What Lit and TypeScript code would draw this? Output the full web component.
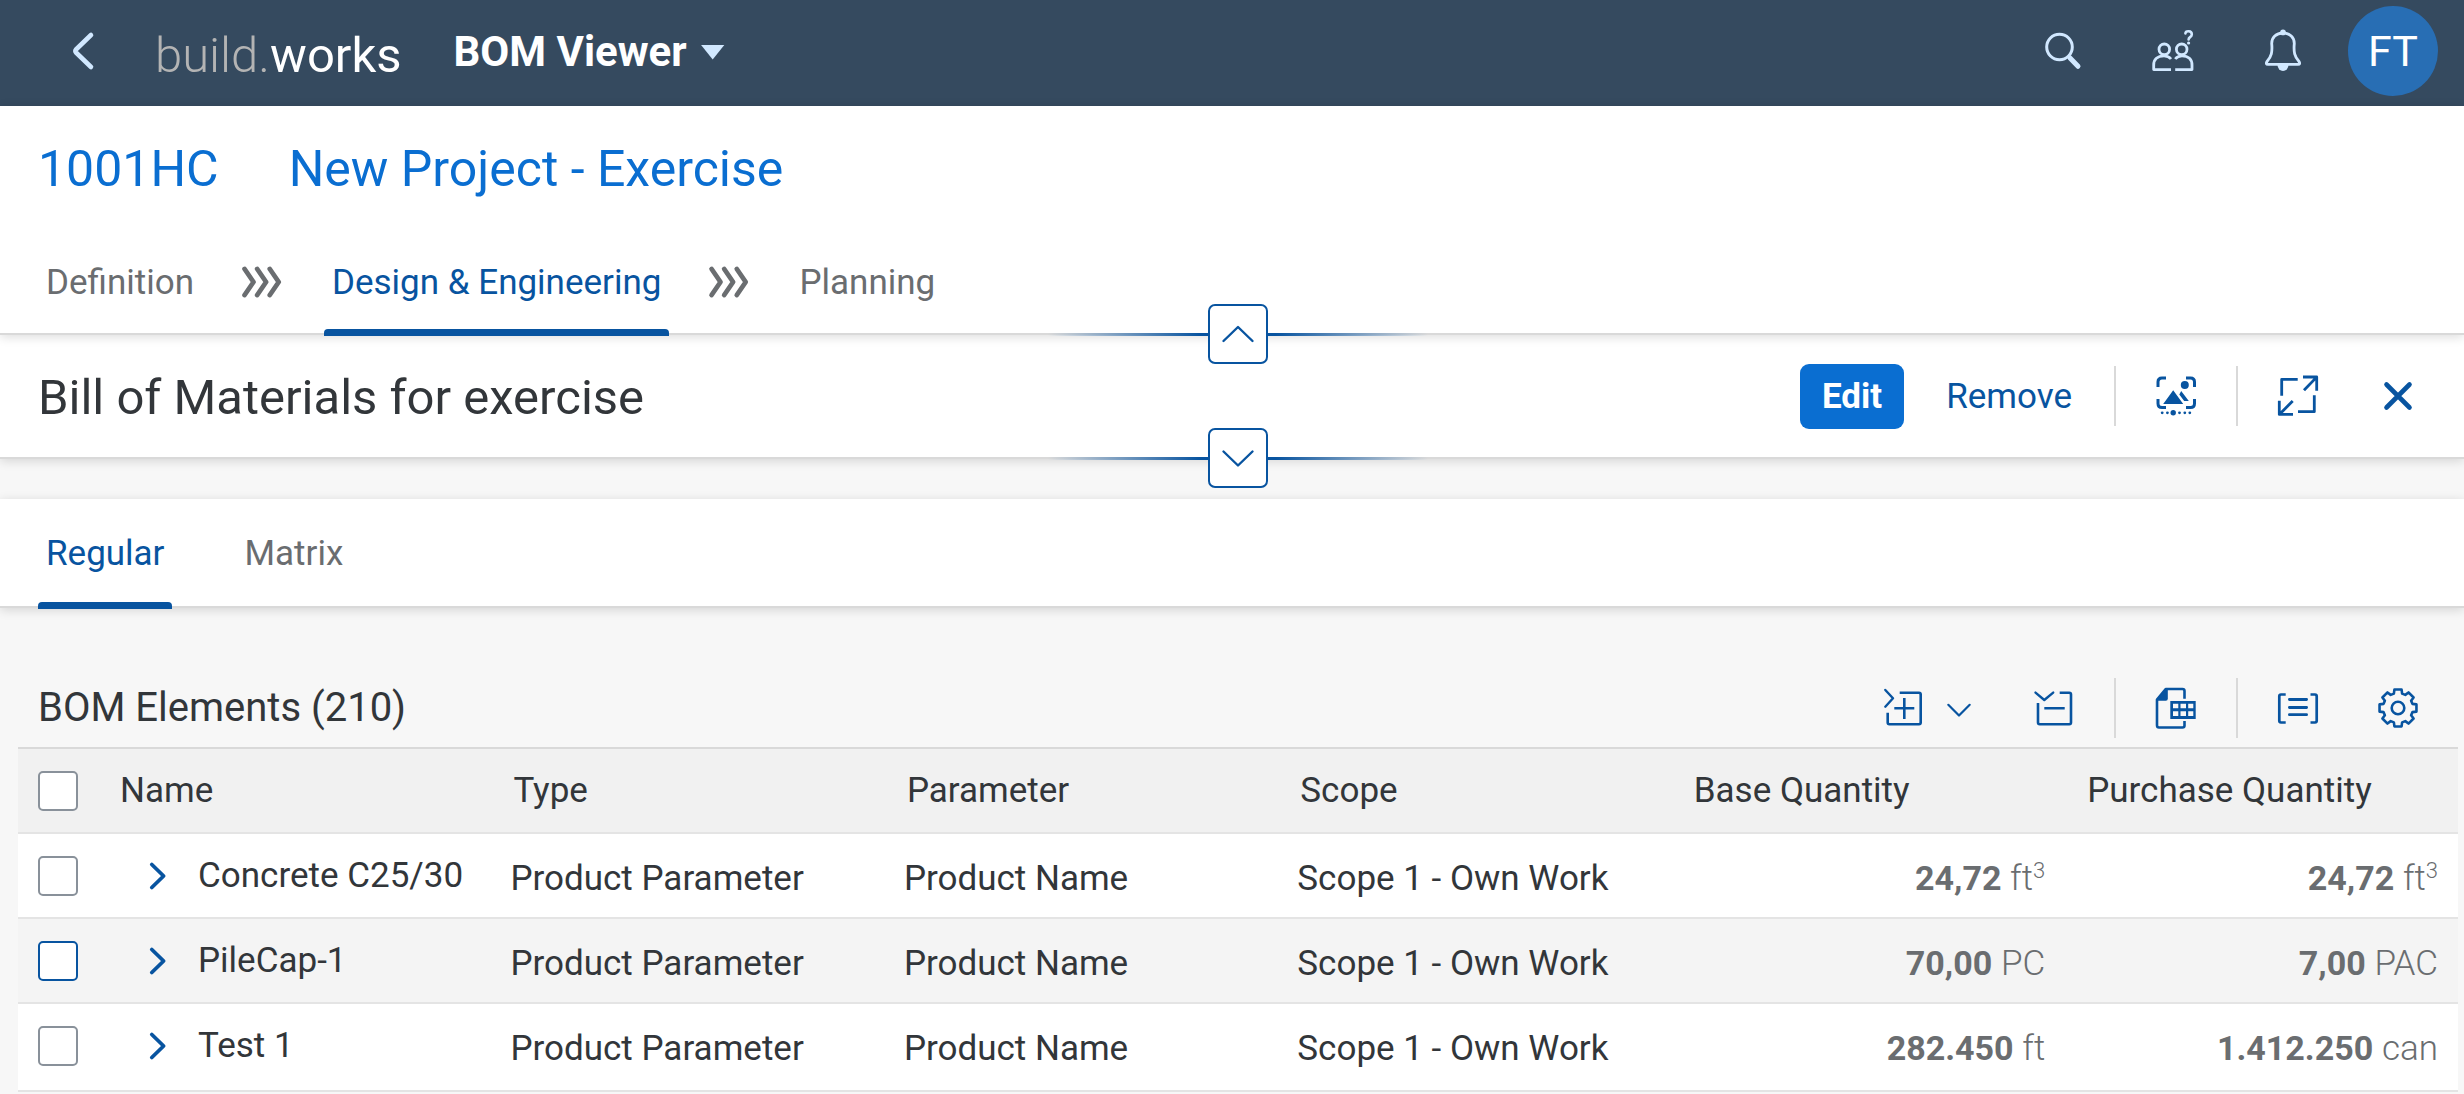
import { LitElement, html, css, svg, nothing, type TemplateResult } from "lit";
import { customElement, property } from "lit/decorators.js";
import { classMap } from "lit/directives/class-map.js";

const gearPath = (): string => {
  const points: string[] = [];
  for (let tooth = 0; tooth < 8; tooth++) {
    for (const [radius, offset] of [[15, -16], [18.8, -11], [18.8, 11], [15, 16]]) {
      const angle = ((tooth * 45 + offset - 90) * Math.PI) / 180;
      points.push(`${(24 + radius * Math.cos(angle)).toFixed(2)} ${(24 + radius * Math.sin(angle)).toFixed(2)}`);
    }
  }
  return `M${points.join("L")}Z`;
};

const icons: Record<string, TemplateResult> = {
  back: svg`<path stroke-width="4.6" d="M31 8 L16 22.5 Q14.8 24 16 25.5 L31 40"/>`,
  search: svg`<circle cx="20.5" cy="20" r="12.8" stroke-width="3"/><path stroke-width="5" d="M31 31 L39 39.3"/>`,
  people: svg`<g stroke-width="2.8" stroke-linecap="butt"><circle cx="15.3" cy="22.3" r="5.3"/><circle cx="32.7" cy="22.3" r="5.3"/>
    <path d="M22 32 C20 29.5 18 28.8 15 28.8 C8.5 28.8 4.7 32.5 4.7 38 V42.6 H22"/>
    <path d="M26.2 32 C28.2 29.5 30 28.8 33 28.8 C39.5 28.8 43 32.5 43 38 V42.6 H26.2"/></g>
    <path stroke-width="2.6" d="M36.4 6.4 C36.6 3.6 42.8 3.2 42.8 7.4 C42.8 10.2 39.6 10 39.6 12.4"/><circle class="solid" cx="39.6" cy="16" r="1.6"/>`,
  bell: svg`<path stroke-width="2.8" d="M24 6 C17 6 12.7 10.8 12.7 16.5 C13.5 25 12.5 29.5 8 34.5 Q6.3 37.4 9 37.4 H39 Q41.7 37.4 40 34.5 C35.5 29.5 34.5 25 35.3 16.5 C35.3 10.8 31 6 24 6Z"/>
    <circle class="solid" cx="24" cy="5.4" r="2.8"/><path class="solid" d="M18.5 38 H29.5 A5.5 6 0 0 1 18.5 38Z"/>`,
  picture: svg`<path stroke-width="3" stroke-linecap="butt" d="M6 15 V10 Q6 6 10 6 H14 M34 6 H38.5 Q42.5 6 42.5 10 V15 M6 27 V31.5 Q6 35.5 10 35.5 H14 M34 35.5 H38.5 Q42.5 35.5 42.5 31.5 V27"/>
    <path class="solid" d="M21.2 18.3 L31.2 32 H11.2Z M27.3 22.5 L29.2 19 L36.8 29 H32.2Z"/>
    <circle class="solid" cx="32.8" cy="13" r="4"/><circle class="solid" cx="21.2" cy="40.8" r="2.7"/>
    ${[10.2, 15.4, 27.5, 32.8, 37.8].map((x) => svg`<circle class="solid" cx=${x} cy="40.8" r="1.4"/>`)}`,
  fullscreen: svg`<path stroke-width="2.8" stroke-linecap="butt" d="M7.7 23.7 V7.3 H23.7 M40.3 23.3 V39.7 H24 M29 5 H42.7 V18.7 M42.4 5.4 L30 18.3 M5.3 28.7 V42.4 H19 M18.7 29 L5.6 42.2"/>`,
  close: svg`<path stroke-width="4.6" d="M12.5 12.5 L35.5 35.5 M35.5 12.5 L12.5 35.5"/>`,
  expandAll: svg`<path stroke-width="2.4" d="M6.3 6 L14 14.3 L6.3 22.7"/><path stroke-width="2.6" stroke-linecap="butt" d="M20.7 8.7 H40 Q41.7 8.7 41.7 10.4 V38.6 Q41.7 40.3 40 40.3 H10.4 Q8.7 40.3 8.7 38.6 V28.7 M15.3 24.3 H35.3 M25.3 14 V35"/>`,
  collapseAll: svg`<path stroke-width="2.4" d="M5.5 8.6 L14.3 16 L23.2 8.6"/><path stroke-width="2.6" stroke-linecap="butt" d="M29.7 8.7 H39.3 Q41 8.7 41 10.4 V38.6 Q41 40.3 39.3 40.3 H9.7 Q8 40.3 8 38.6 V19 M14.3 24.3 H34.7"/>`,
  excel: svg`<path stroke-width="2.6" stroke-linecap="butt" d="M32.5 14.7 V7 Q32.5 5 30.5 5 H13.7 L5 15.5 V41.3 Q5 43.5 7 43.5 H30.5 Q32.5 43.5 32.5 41.5 V37"/>
    <path class="solid" d="M13.5 5 H15.8 V14.7 Q15.8 16.7 13.8 16.7 H5Z"/>
    <path class="solid" fill-rule="evenodd" d="M18.3 17 H43.7 V35 H18.3Z M21 19.7 V24.3 H26.3 V19.7Z M28.5 19.7 V24.3 H34 V19.7Z M36.2 19.7 V24.3 H41.3 V19.7Z M21 27.3 V32 H26.3 V27.3Z M28.5 27.3 V32 H34 V27.3Z M36.2 27.3 V32 H41.3 V27.3Z"/>`,
  list: svg`<path stroke-width="2.7" stroke-linecap="butt" d="M11.7 10.5 H7 Q5.3 10.5 5.3 12.2 V36.8 Q5.3 38.5 7 38.5 H11.7 M36.5 10.5 H41 Q42.7 10.5 42.7 12.2 V36.8 Q42.7 38.5 41 38.5 H36.5"/><path stroke-width="2.8" d="M15.4 15.5 H32.6 M15.4 23.5 H32.6 M15.4 30.7 H32.6"/>`,
  gear: svg`<path stroke-width="2.6" d=${gearPath()}/><circle cx="24" cy="24" r="6.3" stroke-width="2.6"/>`,
  up: svg`<path stroke-width="2.4" d="M9.5 31 L24 17 L38.5 31"/>`,
  down: svg`<path stroke-width="2.4" d="M9.5 17.5 L24 31.5 L38.5 17.5"/>`,
  menuDown: svg`<path stroke-width="2.2" d="M13.3 20.8 L24 31.5 L34.7 20.8"/>`,
  right: svg`<path stroke-width="3.8" d="M18.8 12.5 L30.6 24 L18.8 35.5"/>`,
  steps: svg`<path stroke-width="4.8" d="M5.6 11 L14.5 24 L5.6 37 M18.2 11 L27.1 24 L18.2 37 M30.8 11 L39.7 24 L30.8 37"/>`,
};

@customElement("ui-icon")
export class UiIcon extends LitElement {
  static styles = css`
    :host { display: inline-flex; flex: none; }
    svg { display: block; width: 48px; height: 48px; fill: none; stroke: currentColor; stroke-linecap: round; stroke-linejoin: round; }
    .solid { fill: currentColor; stroke: none; }
  `;
  @property() name = "";
  render() {
    return html`<svg viewBox="0 0 48 48" aria-hidden="true">${icons[this.name] ?? nothing}</svg>`;
  }
}

interface Quantity { value: string; unit: string; power?: string }
interface BomRow { name: string; type: string; parameter: string; scope: string; base: Quantity; purchase: Quantity; active?: boolean }

const common = { type: "Product Parameter", parameter: "Product Name", scope: "Scope 1 - Own Work" };
const rows: BomRow[] = [
  { name: "Concrete C25/30", ...common, base: { value: "24,72", unit: "ft", power: "3" }, purchase: { value: "24,72", unit: "ft", power: "3" } },
  { name: "PileCap-1", ...common, base: { value: "70,00", unit: "PC" }, purchase: { value: "7,00", unit: "PAC" }, active: true },
  { name: "Test 1", ...common, base: { value: "282.450", unit: "ft" }, purchase: { value: "1.412.250", unit: "can" } },
];
const columns = ["Name", "Type", "Parameter", "Scope", "Base Quantity", "Purchase Quantity"];

@customElement("app-root")
export class AppRoot extends LitElement {
  static styles = css`
    :host { display: block; min-height: 100vh; background: #f7f7f7; color: #32363a; font: 35px/48px Roboto, "Liberation Sans", sans-serif; }
    *, *::before, *::after { box-sizing: border-box; }
    h1, h2, h3 { margin: 0; font-weight: 400; }
    button { margin: 0; padding: 0; border: 0; background: none; color: inherit; font: inherit; display: inline-flex; align-items: center; justify-content: center; cursor: pointer; }
    a { color: inherit; text-decoration: none; }

    .shell { display: flex; align-items: center; height: 106px; padding: 0 26px 4px 60px; background: #354a5f; color: #d1e8ff; }
    .logo { margin-left: 47px; padding-top: 10px; font-size: 49px; color: #fff; }
    .logo-light { font-weight: 300; color: #b4b4b4; }
    .app-title { gap: 14px; margin-left: 52px; padding-top: 2px; font-size: 42px; font-weight: 700; color: #fff; }
    .triangle { width: 24px; height: 15px; background: #d1e8ff; clip-path: polygon(0 0, 100% 0, 50% 100%); }
    .shell-actions { display: flex; gap: 20px; margin-left: auto; }
    .shell-button { width: 90px; height: 90px; }
    .avatar { border-radius: 50%; background: #286eb4; color: #fff; font-size: 43px; }

    .panel { position: relative; background: #fff; border-bottom: 2px solid #d9d9d9; box-shadow: 0 2px 10px rgba(0, 0, 0, 0.14); }
    .project { z-index: 2; }
    .document { z-index: 1; display: flex; align-items: center; justify-content: space-between; height: 124px; padding: 0 26px 0 38px; }
    .project-title { display: flex; align-items: center; gap: 70px; min-height: 125px; padding: 0 38px; font-size: 50px; color: #0a6ed1; }
    .document-title { padding-top: 4px; font-size: 49px; line-height: 60px; }

    .tabs { display: flex; align-items: center; gap: 40px; height: 102px; padding: 0 38px; color: #6a6d70; }
    .view-tabs { gap: 64px; height: 107px; }
    .tab { position: relative; display: flex; align-items: center; height: 100%; padding: 2px 8px 0; }
    .tab.selected { color: #0854a0; }
    .tab.selected::after { content: ""; position: absolute; left: 0; right: 0; bottom: -3px; height: 7px; border-radius: 4px 4px 0 0; background: #0854a0; }
    .step { display: flex; width: 42px; justify-content: center; }

    .toggle { position: absolute; left: calc(50% + 6px); bottom: -31px; width: 380px; height: 60px; margin-left: -190px; display: flex; justify-content: center; align-items: center; pointer-events: none; }
    .toggle::before { content: ""; position: absolute; left: 0; right: 0; top: 29px; height: 3px; background: linear-gradient(90deg, transparent, #0854a0 40%, #0854a0 60%, transparent); }
    .toggle-button { position: relative; width: 60px; height: 60px; border: 2px solid #0854a0; border-radius: 7px; background: #fff; color: #0854a0; pointer-events: auto; }

    .actions { display: flex; align-items: center; gap: 20px; color: #0854a0; }
    .icon-button { width: 80px; height: 65px; }
    .text-button { height: 65px; padding: 2px 22px 0; }
    .primary { border-radius: 9px; background: #0a6ed1; color: #fff; font-weight: 700; }
    .divider { width: 2px; height: 60px; background: #d9d9d9; }
    .split { display: flex; padding-right: 10px; }
    .split-main { width: 62px; height: 65px; }
    .split-menu { width: 50px; height: 65px; }

    .views { margin-top: 40px; }
    .toolbar { display: flex; align-items: center; justify-content: space-between; height: 78px; margin-top: 61px; padding: 0 26px 0 38px; }
    .toolbar-title { font-size: 40px; }

    .table-wrap { padding: 0 6px 0 18px; }
    table { width: 100%; table-layout: fixed; border-collapse: separate; border-spacing: 0; border-top: 2px solid #d9d9d9; }
    .col-check { width: 84px; }
    .col-data { width: 16.125%; }
    th, td { height: 85px; padding: 0 18px; border-bottom: 2px solid #e4e4e4; text-align: left; font-weight: 400; white-space: nowrap; vertical-align: middle; }
    th { background: #f1f1f1; }
    td { padding: 7px 15px 0; background: #fff; }
    tr.active td { background: #f4f4f4; }
    .check-cell { padding: 0 0 0 20px; }
    .name-cell { padding: 0 13px 0 35px; }
    .name { display: flex; align-items: center; gap: 21px; }
    .row-toggle { width: 40px; height: 48px; color: #0854a0; }
    .quantity { padding: 5px 24px 0 0; text-align: right; color: #6a6d70; }
    .quantity:last-child { padding-right: 20px; }
    tr:last-child td { height: 88px; padding-bottom: 3px; }
    .value { font-size: 34px; font-weight: 700; }
    .unit { font-weight: 300; }
    sup { font-size: 22px; line-height: 0; vertical-align: 12px; }
    .check { appearance: none; display: block; width: 40px; height: 40px; margin: 0; border: 2px solid #89919a; border-radius: 5px; background: #fff; }
    .check:checked { background: #0854a0; }
    tr.active .check { border-color: #0854a0; }
  `;

  private iconButton(name: string, label: string, cls = "icon-button") {
    return html`<button class=${cls} aria-label=${label}><ui-icon name=${name}></ui-icon></button>`;
  }

  private toggle(name: string, label: string) {
    return html`<div class="toggle">${this.iconButton(name, label, "toggle-button")}</div>`;
  }

  private quantity(q: Quantity) {
    return html`<td class="quantity"><span class="value">${q.value}</span> <span class="unit">${q.unit}${q.power ? html`<sup>${q.power}</sup>` : nothing}</span></td>`;
  }

  private row(r: BomRow) {
    return html`<tr class=${classMap({ active: !!r.active })}>
      <td class="check-cell"><input class="check" type="checkbox" aria-label=${r.name} /></td>
      <td class="name-cell"><div class="name">${this.iconButton("right", `Expand ${r.name}`, "row-toggle")}<span>${r.name}</span></div></td>
      <td>${r.type}</td>
      <td>${r.parameter}</td>
      <td>${r.scope}</td>
      ${this.quantity(r.base)}${this.quantity(r.purchase)}
    </tr>`;
  }

  render() {
    return html`
      <header class="shell">
        ${this.iconButton("back", "Back", "back")}
        <a class="logo" href="#"><span class="logo-light">build.</span>works</a>
        <button class="app-title">BOM Viewer<span class="triangle"></span></button>
        <div class="shell-actions">
          ${this.iconButton("search", "Search", "shell-button")}
          ${this.iconButton("people", "Support", "shell-button")}
          ${this.iconButton("bell", "Notifications", "shell-button")}
          <button class="shell-button avatar">FT</button>
        </div>
      </header>
      <main>
        <section class="panel project">
          <h1 class="project-title"><span>1001HC</span><span>New Project - Exercise</span></h1>
          <nav class="tabs">
            <a class="tab" href="#definition">Definition</a>
            <span class="step"><ui-icon name="steps"></ui-icon></span>
            <a class="tab selected" href="#design">Design &amp; Engineering</a>
            <span class="step"><ui-icon name="steps"></ui-icon></span>
            <a class="tab" href="#planning">Planning</a>
          </nav>
          ${this.toggle("up", "Collapse header")}
        </section>
        <section class="panel document">
          <h2 class="document-title">Bill of Materials for exercise</h2>
          <div class="actions">
            <button class="text-button primary">Edit</button>
            <button class="text-button">Remove</button>
            <span class="divider"></span>
            ${this.iconButton("picture", "Picture view")}
            <span class="divider"></span>
            ${this.iconButton("fullscreen", "Full screen")}
            ${this.iconButton("close", "Close")}
          </div>
          ${this.toggle("down", "Expand header")}
        </section>
        <section class="panel views">
          <nav class="tabs view-tabs">
            <a class="tab selected" href="#regular">Regular</a>
            <a class="tab" href="#matrix">Matrix</a>
          </nav>
        </section>
        <section>
          <div class="toolbar">
            <h3 class="toolbar-title">BOM Elements (210)</h3>
            <div class="actions">
              <div class="split">
                ${this.iconButton("expandAll", "Expand all", "split-main")}
                ${this.iconButton("menuDown", "Expand options", "split-menu")}
              </div>
              ${this.iconButton("collapseAll", "Collapse all")}
              <span class="divider"></span>
              ${this.iconButton("excel", "Export to spreadsheet")}
              <span class="divider"></span>
              ${this.iconButton("list", "Group")}
              ${this.iconButton("gear", "Settings")}
            </div>
          </div>
          <div class="table-wrap">
            <table>
              <colgroup><col class="col-check" />${columns.slice(1).map(() => html`<col class="col-data" />`)}<col /></colgroup>
              <thead>
                <tr>
                  <th class="check-cell"><input class="check" type="checkbox" aria-label="Select all" /></th>
                  ${columns.map((c) => html`<th scope="col">${c}</th>`)}
                </tr>
              </thead>
              <tbody>${rows.map((r) => this.row(r))}</tbody>
            </table>
          </div>
        </section>
      </main>
    `;
  }
}
